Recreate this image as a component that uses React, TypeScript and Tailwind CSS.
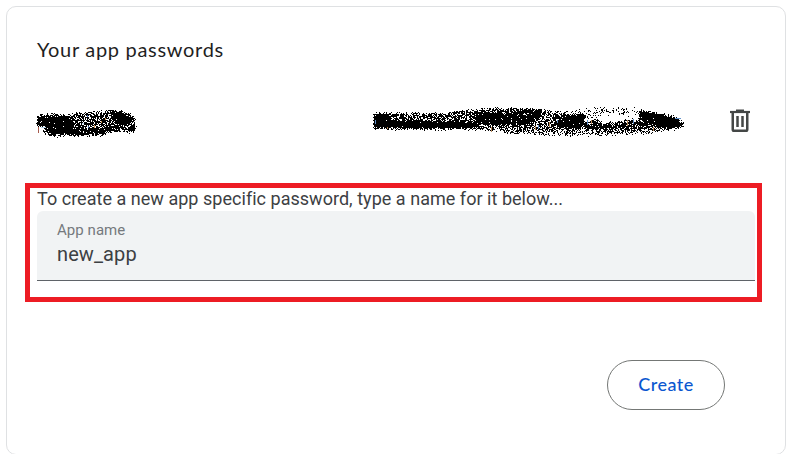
type Spray = { pts: [number, number][]; d: number };

// Small deterministic generator so the spray looks the same on every load.
function makeRandom(seed: number) {
  let s = seed;
  return () => {
    s = (s * 1664525 + 1013904223) >>> 0;
    return s / 4294967296;
  };
}

function inside(x: number, y: number, pts: [number, number][]) {
  let hit = false;
  for (let i = 0, j = pts.length - 1; i < pts.length; j = i++) {
    const [xi, yi] = pts[i];
    const [xj, yj] = pts[j];
    if (yi > y !== yj > y && x < ((xj - xi) * (y - yi)) / (yj - yi) + xi) hit = !hit;
  }
  return hit;
}

// Each sample point is nudged a little so the edges of the spray break up.
function sprayPath(w: number, h: number, shapes: Spray[], seed: number) {
  const rnd = makeRandom(seed);
  let d = "";
  for (let y = 0; y < h; y++) {
    for (let x = 0; x < w; x++) {
      const px = x + 0.5 + (rnd() - 0.5) * 3;
      const py = y + 0.5 + (rnd() - 0.5) * 3.4;
      let density = 0;
      for (const s of shapes) if (inside(px, py, s.pts)) density = Math.max(density, s.d);
      if (rnd() < density) d += `M${x} ${y}h1v1h-1z`;
    }
  }
  return d;
}

const nameSpray: Spray[] = [
  { d: 0.68, pts: [[1, 7], [7, 4], [30, 5], [48, 3], [68, 1], [80, 0], [92, 2], [99, 8], [98, 14], [100, 19], [96, 23], [84, 20], [72, 24], [60, 26], [32, 25], [20, 27], [8, 24], [7, 17], [1, 16]] },
  { d: 0.99, pts: [[0, 9], [4, 6], [10, 6], [17, 7], [26, 5], [34, 6], [37, 17], [34, 24], [16, 24], [11, 22], [13, 17], [2, 15]] },
  { d: 0.99, pts: [[76, 3], [85, 2], [98, 7], [97, 12], [88, 15], [76, 11]] },
  { d: 0.95, pts: [[93, 16], [98, 14], [101, 18], [97, 22], [92, 20]] },
  { d: 0.94, pts: [[32, 20], [48, 19], [65, 17], [82, 15], [91, 18], [77, 20], [68, 24], [50, 25], [34, 24]] },
];

const dateSpray: Spray[] = [
  { d: 0.62, pts: [[1, 6], [25, 6], [60, 7], [97, 3], [132, 1], [165, 2], [181, 5], [212, 7], [212, 19], [180, 24], [145, 23], [112, 23], [88, 22], [0, 22]] },
  { d: 0.99, pts: [[0, 10], [4, 6], [16, 7], [20, 13], [55, 15], [90, 14], [103, 16], [110, 21], [60, 22], [10, 22], [0, 20]] },
  { d: 0.95, pts: [[102, 5], [127, 4], [132, 7], [149, 3], [168, 3], [168, 10], [158, 16], [140, 18], [119, 18], [102, 15]] },
  { d: 0.97, pts: [[188, 8], [212, 8], [212, 18], [208, 22], [188, 21], [181, 17]] },
  { d: 0.46, pts: [[115, 17], [150, 18], [180, 18], [287, 19], [301, 22], [285, 26], [257, 27], [234, 28], [205, 28], [170, 28], [140, 27], [120, 23]] },
  { d: 0.26, pts: [[180, 4], [211, 3], [228, 1], [260, 1], [270, 4], [268, 9], [239, 7], [212, 12], [198, 8]] },
  { d: 0.86, pts: [[212, 17], [220, 12], [230, 17], [250, 14], [270, 12], [288, 18], [300, 22], [280, 21], [246, 22], [212, 22]] },
  { d: 0.99, pts: [[266, 4], [280, 5], [298, 9], [305, 12], [310, 16], [309, 20], [303, 22], [285, 21], [266, 10]] },
];

const namePath = sprayPath(101, 28, nameSpray, 17);
const datePath = sprayPath(311, 30, dateSpray, 91);

function NameScribble() {
  return (
    <svg width="101" height="28" viewBox="0 0 101 28" shapeRendering="crispEdges" aria-hidden="true">
      <path d={namePath} />
      <path d="M2 17h1v6h-1z" fill="#a65a4d" />
      <path d="M51 5h1v2h-1zM52 16h1v2h-1z" fill="#4669b0" />
      <path d="M58 15h1v3h-1zM69 8h1v2h-1zM65 11h1v2h-1z" fill="#c99151" />
      <path d="M5 17h5v1h-5zM46 13h2v1h-2z" fill="#b7d6ea" />
    </svg>
  );
}

function DateScribble() {
  return (
    <svg width="311" height="30" viewBox="0 0 311 30" shapeRendering="crispEdges" aria-hidden="true">
      <path d={datePath} />
      <path d="M2 13h1v4h-1zM165 18h1v4h-1zM184 13h1v3h-1zM214 13h1v5h-1zM260 12h1v5h-1zM302 11h6v1h-6z" fill="#6291c9" />
      <path d="M14 20h1v2h-1zM118 20h1v5h-1zM162 19h1v4h-1zM176 15h1v5h-1zM218 13h1v4h-1zM254 13h1v6h-1zM280 20h1v4h-1z" fill="#b98a5b" />
    </svg>
  );
}

function TrashIcon() {
  return (
    <svg width="22" height="24" viewBox="0 0 22 24" fill="none" stroke="#444746" aria-hidden="true">
      <path d="M7 1.3h8" strokeWidth="1.6" />
      <path d="M1 3h20" strokeWidth="2.2" />
      <path d="M3.75 3.5v17q0 1.3 1.3 1.3h11.9q1.3 0 1.3-1.3v-17" strokeWidth="2.5" />
      <path d="M8.5 7v11M13.5 7v11" strokeWidth="2.5" />
    </svg>
  );
}

export default function App() {
  return (
    <div className="h-[454px] w-[792px] overflow-hidden bg-white pl-1.5 pt-1.5 font-['Roboto',sans-serif]">
      <section className="flex h-[449px] w-[780px] flex-col rounded-[10px] border border-[#dfe1e3] pl-[18px] pr-[23px]">
        <h2 className="ml-3 mt-7 h-7 whitespace-nowrap font-['Lato',sans-serif] text-[20px] leading-7 tracking-[0.7px] text-[#1f1f1f]">
          Your app passwords
        </h2>
        <div className="ml-[11px] mt-11 flex h-[30px] items-start">
          <div className="pt-[3px]"><NameScribble /></div>
          <div className="ml-[236px]"><DateScribble /></div>
          <button className="ml-[45px] pt-[2px]" aria-label="Delete"><TrashIcon /></button>
        </div>
        <div className="mt-[46px] h-[119px] w-[737px] shrink-0 border-5 border-[#ed1c24] pl-[7px]">
          <p className="h-[23px] whitespace-nowrap text-[18px] leading-[21px] tracking-[0.03px] text-[#3c4043]">
            To create a new app specific password, type a name for it below...
          </p>
          <label className="block h-[70px] w-[718px] rounded-t-[6px] border-b border-[#5f6368] bg-[#f1f3f4] px-5 pt-[9px]">
            <span className="block text-[15px] leading-5 tracking-[0.05px] text-[#75797d]">App name</span>
            <input
              defaultValue="new_app"
              className="block h-7 w-full bg-transparent text-[20px] leading-7 tracking-[0.1px] text-[#3c4043] outline-none"
            />
          </label>
        </div>
        <div className="mt-[58px] flex justify-end pr-[37px]">
          <button className="h-[50px] w-[118px] rounded-full border border-[#747775] pb-0.5 font-['Lato',sans-serif] text-[18px] font-medium tracking-[0.45px] text-[#0b57d0]">
            Create
          </button>
        </div>
      </section>
    </div>
  );
}
